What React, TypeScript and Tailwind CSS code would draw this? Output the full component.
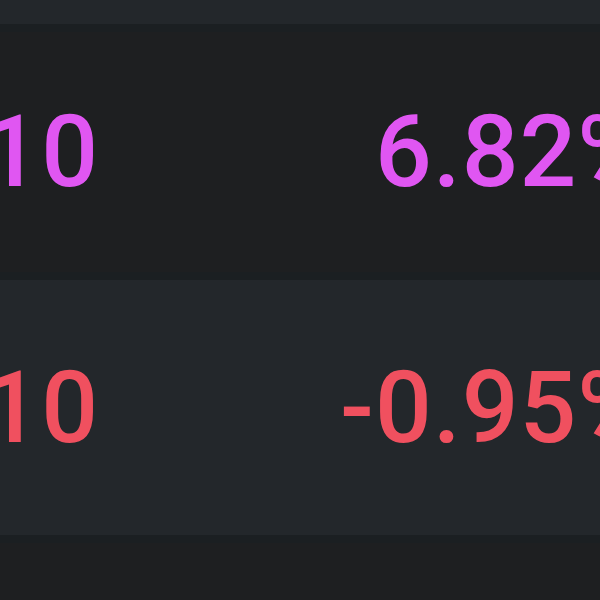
import React from 'react';

const rows = [
  { id: 'top', qty: '', change: '', tone: 'light', height: 'h-[32px]' },
  { id: 'a', qty: '10', change: '6.82%', tone: 'dark', height: 'h-[248px]' },
  { id: 'b', qty: '10', change: '-0.95%', tone: 'light', height: 'h-[263px]' },
  { id: 'c', qty: '', change: '', tone: 'dark', height: 'h-[57px]' },
];

export default function App() {
  return (
    <div
      className="w-[600px] h-[600px] overflow-hidden bg-[#1e1f21]"
      style={{ fontFamily: 'Roboto, "Noto Sans", sans-serif' }}
    >
      {rows.map((row, i) => {
        const up = !row.change.startsWith('-');
        const color = up ? 'text-[#e056f2]' : 'text-[#f0505f]';
        return (
          <div
            key={row.id}
            className={`flex items-center ${row.height} ${
              row.tone === 'light' ? 'bg-[#23272b]' : 'bg-[#1e1f21]'
            } ${i < rows.length - 1 ? 'border-b-[8px] border-[#1b1f22]' : ''}`}
          >
            {row.qty && (
              <>
                <div className={`w-[99px] shrink-0 flex justify-end whitespace-nowrap text-[100px] font-medium leading-none tracking-[1px] ${color}`}>
                  <span>{row.qty}</span>
                </div>
                <div className={`flex-1 flex justify-end whitespace-nowrap text-[100px] font-medium leading-none tracking-[1px] mr-[-52px] ${color}`}>
                  <span>{row.change}</span>
                </div>
              </>
            )}
          </div>
        );
      })}
    </div>
  );
}
